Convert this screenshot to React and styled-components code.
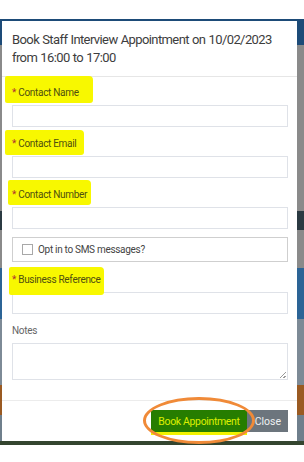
import React from "react"
import styled, { createGlobalStyle } from "styled-components"

const GlobalStyle = createGlobalStyle`
  html, body {
    margin: 0;
    padding: 0;
    background: #fff;
  }
  body {
    font-family: Roboto, "Noto Sans", sans-serif;
    color: #444;
  }
`

const fields = [
  { label: "Contact Name", hl: [-8, 1, -7, -14] },
  { label: "Contact Email", hl: [-5, 2, -7, -7] },
  { label: "Contact Number", hl: [-6, 1, -4, -4] },
]

const App = () => {
  return (
    <Screen>
      <GlobalStyle />
      <Backdrop>
        <Modal>
          <Header>
            <Title>Book Staff Interview Appointment on 10/02/2023 from 16:00 to 17:00</Title>
          </Header>
          <Body>
            {fields.map(f => (
              <Group key={f.label}>
                <Label $hl={f.hl}>
                  <Req>*</Req> {f.label}
                </Label>
                <Input />
              </Group>
            ))}
            <CheckRow>
              <Box />
              <span>Opt in to SMS messages?</span>
            </CheckRow>
            <Group>
              <Label $hl={[-4, 6, -3, -3]}>
                <Req>*</Req> Business Reference
              </Label>
              <Input />
            </Group>
            <Group>
              <Label>Notes</Label>
              <TextArea />
            </Group>
          </Body>
          <Footer>
            <PrimaryButton>
              Book Appointment
              <Circle />
            </PrimaryButton>
            <CloseButton>Close</CloseButton>
          </Footer>
        </Modal>
      </Backdrop>
    </Screen>
  )
}

export default App

const Screen = styled.div`
  width: 304px;
  height: 462px;
  padding-top: 19px;
  box-sizing: border-box;
  overflow: hidden;
`

const Backdrop = styled.div`
  height: 426px;
  box-sizing: border-box;
  padding: 2px 7px 4px 2px;
  background: linear-gradient(
    to bottom,
    #1d4b78 0px, #1d4b78 26px,
    #8a8a8a 26px, #8a8a8a 192px,
    #2b3a42 192px, #2b3a42 211px,
    #8a8a8a 211px, #8a8a8a 249px,
    #2c6496 249px, #2c6496 300px,
    #7d8a96 300px, #7d8a96 366px,
    #9a5a22 366px, #9a5a22 396px,
    #6f7f8c 396px, #6f7f8c 422px,
    #34452f 422px
  );
`

const Modal = styled.div`
  height: 100%;
  background: #fff;
  display: flex;
  flex-direction: column;
`

const Header = styled.div`
  padding: 10px 10px 10px 10px;
  border-bottom: 1px solid #e6e6e6;
`

const Title = styled.div`
  font-size: 13px;
  line-height: 17.5px;
  letter-spacing: -0.6px;
  word-spacing: 0.5px;
  color: #3d3d3d;
`

const Body = styled.div`
  flex: 1;
  padding: 7px 9px 0 10px;
  border-bottom: 1px solid #ececec;
`

const Group = styled.div`
  display: flex;
  flex-direction: column;
  margin-bottom: 8px;
`

const Label = styled.label`
  position: relative;
  z-index: 0;
  width: fit-content;
  font-size: 10px;
  line-height: 18px;
  letter-spacing: -0.3px;
  margin-bottom: 3px;
  color: ${p => (p.$hl ? "#4f4f10" : "#666")};

  &::before {
    content: "";
    display: ${p => (p.$hl ? "block" : "none")};
    position: absolute;
    z-index: -1;
    top: ${p => (p.$hl ? p.$hl[0] : 0)}px;
    bottom: ${p => (p.$hl ? -p.$hl[1] : 0)}px;
    left: ${p => (p.$hl ? p.$hl[2] : 0)}px;
    right: ${p => (p.$hl ? p.$hl[3] : 0)}px;
    background: #f8f800;
    border-radius: 2px 4px 3px 2px;
  }
`

const Req = styled.span`
  color: #b03030;
`

const Input = styled.div`
  height: 22px;
  box-sizing: border-box;
  border: 1px solid #dfe2e8;
  background: #fff;
`

const TextArea = styled.div`
  position: relative;
  height: 37px;
  box-sizing: border-box;
  border: 1px solid #dfe2e8;

  &::after {
    content: "";
    position: absolute;
    right: 1px;
    bottom: 1px;
    width: 6px;
    height: 6px;
    background: linear-gradient(
      135deg,
      transparent 45%, #999 45%, #999 55%, transparent 55%,
      transparent 75%, #999 75%, #999 85%, transparent 85%
    );
  }
`

const CheckRow = styled.div`
  display: flex;
  align-items: center;
  gap: 5px;
  height: 25px;
  box-sizing: border-box;
  margin: 3px 0 9px;
  padding-left: 9px;
  border: 1px solid #cfcfcf;
  font-size: 10px;
  letter-spacing: -0.3px;
  color: #444;
`

const Box = styled.span`
  width: 9px;
  height: 9px;
  border: 1px solid #a8a8a8;
  background: #fff;
`

const Footer = styled.div`
  display: flex;
  justify-content: flex-end;
  align-items: center;
  height: 40px;
  padding-right: 9px;
`

const PrimaryButton = styled.button`
  position: relative;
  height: 22px;
  padding: 0 7px;
  border: none;
  background: #267d00;
  color: #dcef00;
  font-family: Roboto, sans-serif;
  font-size: 10.5px;
  letter-spacing: -0.35px;
  box-shadow: 0 3px 0 #f2f200;
`

const Circle = styled.span`
  position: absolute;
  left: -8px;
  right: -8px;
  top: -13px;
  bottom: -12px;
  border: 3px solid #f08a38;
  border-radius: 50%;
  pointer-events: none;
  z-index: 2;
`

const CloseButton = styled.button`
  height: 22px;
  padding: 0 7px 0 8px;
  border: none;
  background: #6c757d;
  color: #eef0f2;
  font-family: Roboto, sans-serif;
  font-size: 10.5px;
`
